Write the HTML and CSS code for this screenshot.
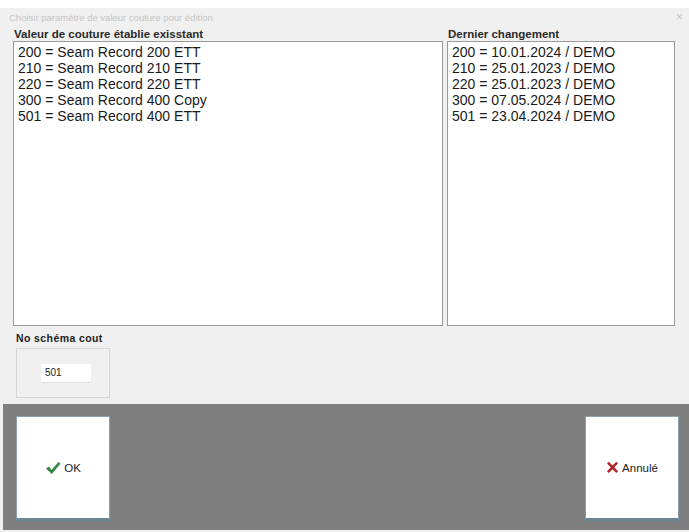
FILE: index.html
```html
<!DOCTYPE html>
<html lang="fr">
<head>
  <meta charset="UTF-8">
  <title>Choisir paramètre de valeur couture pour édition</title>
  <link rel="stylesheet" href="styles.css">
</head>
<body>
  <div class="window">
    <div class="titlebar">
      <span class="title">Choisir paramètre de valeur couture pour édition</span>
      <span class="close">×</span>
    </div>

    <div class="lists">
      <div class="col col-left">
        <div class="col-label">Valeur de couture établie exisstant</div>
        <ul class="listbox">
          <li>200 = Seam Record 200 ETT</li>
          <li>210 = Seam Record 210 ETT</li>
          <li>220 = Seam Record 220 ETT</li>
          <li>300 = Seam Record 400 Copy</li>
          <li>501 = Seam Record 400 ETT</li>
        </ul>
      </div>
      <div class="col col-right">
        <div class="col-label">Dernier changement</div>
        <ul class="listbox">
          <li>200 = 10.01.2024 / DEMO</li>
          <li>210 = 25.01.2023 / DEMO</li>
          <li>220 = 25.01.2023 / DEMO</li>
          <li>300 = 07.05.2024 / DEMO</li>
          <li>501 = 23.04.2024 / DEMO</li>
        </ul>
      </div>
    </div>

    <div class="schema">
      <div class="schema-label">No schéma cout</div>
      <div class="schema-box">
        <input class="schema-input" type="text" value="501">
      </div>
    </div>

    <div class="actions">
      <button class="big-btn" type="button">
        <svg width="16" height="14" viewBox="0 0 16 14"><path d="M1 7.5 L4 5.5 L6.5 9 L13.5 1 L15.5 2.5 L6.8 13 Z" fill="#2e8b3e"/></svg>
        <span>OK</span>
      </button>
      <button class="big-btn" type="button">
        <svg width="13" height="13" viewBox="0 0 13 13"><path d="M1 2.5 L2.8 0.8 L6.5 4.5 L10.3 0.8 L12 2.5 L8.3 6.3 L12 10.2 L10.3 12 L6.5 8.2 L2.8 12 L1 10.2 L4.8 6.3 Z" fill="#b3202a"/></svg>
        <span>Annulé</span>
      </button>
    </div>
  </div>
</body>
</html>
```

FILE: styles.css
```css
body {
  margin: 0;
  background-color: #fff;
  font-family: "Liberation Sans", Arial, sans-serif;
}

.window {
  margin-top: 8px;
  background-color: #f0f0f0;
  height: 524px;
  display: flex;
  flex-direction: column;
}

.titlebar {
  height: 18px;
  display: flex;
  justify-content: space-between;
  align-items: center;
  padding: 0 6px 0 9px;
  color: #c6c6c6;
}

.title {
  font-size: 9.5px;
}

.close {
  font-size: 12px;
  color: #c4c4c4;
}

.lists {
  display: flex;
  gap: 4px;
  padding-left: 13px;
}

.col-left {
  width: 430px;
}

.col-right {
  width: 228px;
}

.col-label {
  font-size: 11.5px;
  font-weight: bold;
  color: #2a2a2a;
  height: 15px;
  line-height: 16px;
  padding-left: 1px;
}

.listbox {
  list-style: none;
  margin: 0;
  padding: 2px 0 0 4px;
  height: 281px;
  background-color: #fff;
  border: 1px solid #9a9a9a;
}

.listbox li {
  font-size: 14px;
  line-height: 16px;
  height: 16px;
  color: #1a1a1a;
}

.schema {
  padding: 6px 0 0 16px;
}

.schema-label {
  font-size: 10.5px;
  font-weight: bold;
  letter-spacing: 0.4px;
  color: #222;
  height: 16px;
}

.schema-box {
  width: 94px;
  height: 50px;
  box-sizing: border-box;
  border: 1px solid #d6d6d6;
  display: flex;
  align-items: center;
  padding-left: 24px;
}

.schema-input {
  width: 50px;
  height: 19px;
  box-sizing: border-box;
  border: none;
  border-bottom: 1px solid #ddd;
  background-color: #fff;
  font-family: "Liberation Sans", Arial, sans-serif;
  font-size: 10px;
  color: #222;
  padding: 0 0 0 4px;
}

.actions {
  margin: 6px 0 2px 3px;
  flex: 1;
  background-color: #7f7f7f;
  display: flex;
  justify-content: space-between;
  align-items: flex-start;
  padding: 12px 10px 0 13px;
}

.big-btn {
  width: 94px;
  height: 105px;
  background-color: #fff;
  border: 1px solid #8aa0ac;
  border-bottom: 3px solid #6a8796;
  display: flex;
  align-items: center;
  justify-content: center;
  gap: 3px;
  font-family: "Liberation Sans", Arial, sans-serif;
  font-size: 11.5px;
  color: #222;
  padding: 0;
}
```
